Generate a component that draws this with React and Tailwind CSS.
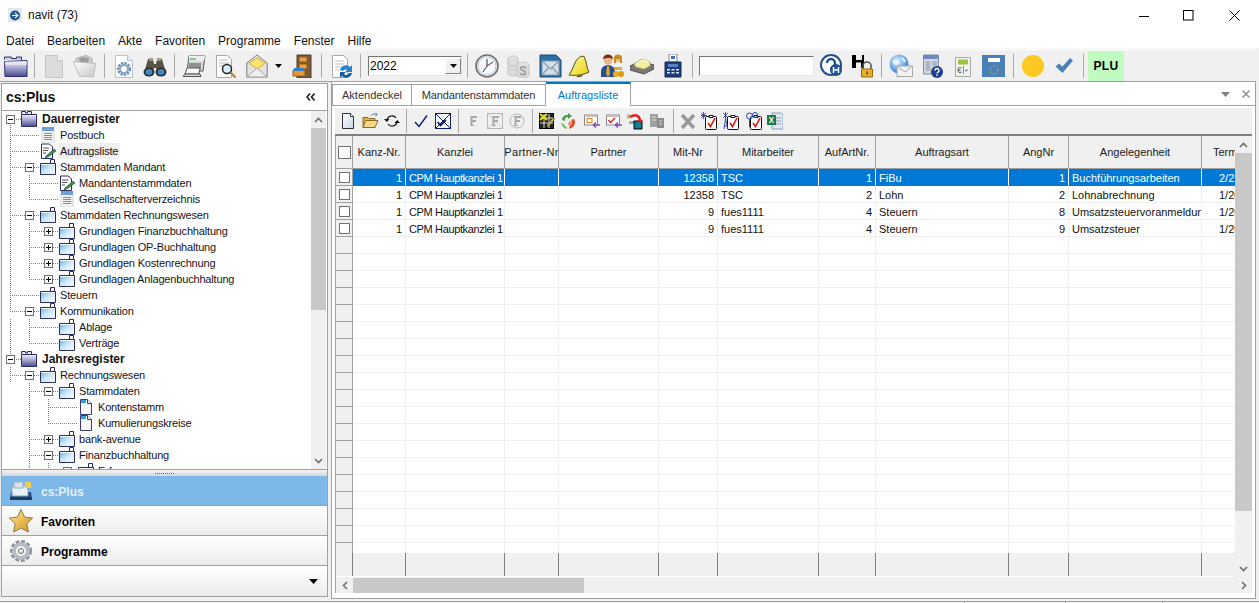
import React from "react";

const S = ({ w = 24, h = 24, vb, c = "", children }) => (
  <svg width={w} height={h} viewBox={vb || `0 0 ${w} ${h}`} className={`shrink-0 block ${c}`}>{children}</svg>
);

const Defs = () => (
  <svg width="0" height="0" className="absolute">
    <defs>
      <linearGradient id="fb" x1="0" y1="0" x2="1" y2="1"><stop offset="0" stopColor="#56b4ee" /><stop offset=".5" stopColor="#cfeafa" /><stop offset="1" stopColor="#ffffff" /></linearGradient>
      <linearGradient id="fr" x1="0" y1="0" x2="0" y2="1"><stop offset="0" stopColor="#f4f4fa" /><stop offset=".35" stopColor="#b9b9da" /><stop offset="1" stopColor="#4a4a92" /></linearGradient>
      <linearGradient id="gd" x1="0" y1="0" x2="1" y2="1"><stop offset="0" stopColor="#ffffff" /><stop offset="1" stopColor="#c9c9c9" /></linearGradient>
      <linearGradient id="bl" x1="0" y1="0" x2="1" y2="1"><stop offset="0" stopColor="#fff" /><stop offset="1" stopColor="#c7d6e6" /></linearGradient>
      <linearGradient id="ye" x1="0" y1="0" x2="1" y2="1"><stop offset="0" stopColor="#fffca0" /><stop offset="1" stopColor="#e8cf10" /></linearGradient>
      <linearGradient id="go" x1="0" y1="0" x2="1" y2="1"><stop offset="0" stopColor="#ffe9a0" /><stop offset="1" stopColor="#d68f10" /></linearGradient>
      <radialGradient id="gb" cx=".4" cy=".35" r=".7"><stop offset="0" stopColor="#e8f3ff" /><stop offset=".6" stopColor="#6aa8ec" /><stop offset="1" stopColor="#2a6cc8" /></radialGradient>
    </defs>
  </svg>
);

/* ---------- main toolbar icons ---------- */
const BigFolder = ({ c }) => (
  <S w={26} c={c}>
    <path d="M1.500 5.500V3h7v1.500h5V3h5v3" fill="#c9c9ea" stroke="#30306f" />
    <path d="M1.500 7.500L24 6.500v16H2z" fill="url(#fr)" stroke="#30306f" />
    <path d="M2 11h22V7.500H2z" fill="#e8e8f6" opacity=".8" />
  </S>
);
const GrayDoc = ({ c }) => (
  <S w={18} c={c}>
    <path d="M.5 1.500h12l5 5v17H.5z" fill="#dcdcdc" stroke="#c6c6c6" />
    <path d="M12.500 1.500v5h5" fill="#fafafa" stroke="#c6c6c6" />
  </S>
);
const GrayFolderOpen = ({ c }) => (
  <S c={c}>
    <path d="M3 4.500L13 1.500l6 3v5H3z" fill="#cfcfcf" stroke="#aaa" />
    <path d="M6 5a6 4 0 0 1 10 0l-1 4H7z" fill="#9b9b9b" />
    <path d="M.5 7.500l22 2-2 13.500-14-1z" fill="url(#gd)" stroke="#bdbdbd" />
  </S>
);
const GearDoc = ({ c }) => (
  <S w={18} c={c}>
    <path d="M.5 1.500h12l5 5v17H.5z" fill="#fff" stroke="#b9c3d0" />
    <path d="M12.500 1.500v5h5" fill="#e6ebf2" stroke="#b9c3d0" />
    <circle cx="9" cy="15" r="5.500" fill="none" stroke="#6d8fb4" strokeWidth="3" strokeDasharray="2.200 1" />
    <circle cx="9" cy="15" r="4" fill="none" stroke="#88a8cc" strokeWidth="2.200" />
  </S>
);
const Binoculars = ({ c }) => (
  <S c={c}>
    <path d="M5 5h5l1 5h2l1-5h5l4 14H15l-2-5h-2l-2 5H1z" fill="#5b5246" />
    <path d="M6 4h4v3H6zM14 4h4v3h-4z" fill="#a49a88" />
    <ellipse cx="6" cy="18" rx="5.500" ry="4.500" fill="#2b2b2b" />
    <ellipse cx="18" cy="18" rx="5.500" ry="4.500" fill="#2b2b2b" />
    <ellipse cx="6" cy="18" rx="3.500" ry="3" fill="#3f88c5" />
    <ellipse cx="18" cy="18" rx="3.500" ry="3" fill="#3f88c5" />
  </S>
);
const Printer = ({ c }) => (
  <S c={c}>
    <path d="M7 2h16l-2 15H5z" fill="#d4d6d8" stroke="#55595c" />
    <path d="M7 2h16l-1 5H7z" fill="#eceded" />
    <path d="M8 4h6v2H8z" fill="#7dc87d" />
    <path d="M7 9h12v6H7z" fill="#8d9092" />
    <path d="M5 14h13l-1 6H3z" fill="#fafafa" stroke="#55595c" />
    <path d="M3 20h15l1 2.500H1z" fill="#d8d8d8" stroke="#55595c" />
  </S>
);
const SearchDoc = ({ c }) => (
  <S w={22} c={c}>
    <path d="M.5 1.500h11l4 4v18H.5z" fill="#fff" stroke="#a9a9a9" />
    <path d="M3 6h8M3 9h10M3 12h5" stroke="#b5b5b5" />
    <circle cx="11" cy="15" r="4.500" fill="#dbeeff" stroke="#222" strokeWidth="1.500" />
    <path d="M14.500 18.500l5 5" stroke="#b58a2c" strokeWidth="2.400" />
  </S>
);
const Envelope = ({ c }) => (
  <S w={22} c={c}>
    <path d="M.8 9L11 1l10.200 8v14H.8z" fill="#e3e3e3" stroke="#7c7c7c" />
    <path d="M3 9l8-5 8 5-8 6z" fill="#ffe36a" stroke="#cfae2a" />
    <path d="M1 23l10-9 10 9z" fill="#f0f0f0" stroke="#a5a5a5" />
  </S>
);
const Cabinet = ({ c }) => (
  <S w={20} c={c}>
    <path d="M5 1h14v23H5z" fill="#7a5a38" stroke="#4f3a22" />
    <path d="M7 3h8v5H7zM7 10h8v5H7z" fill="#e9a23d" stroke="#8a5a20" />
    <path d="M1 16h12v6H1z" fill="#e89b30" stroke="#8a5a20" />
    <path d="M2 14h10v3H2z" fill="#2f7fd0" />
  </S>
);
const DocRefresh = ({ c }) => (
  <S w={22} c={c}>
    <path d="M.5 1.500h11l4 4v18H.5z" fill="#fff" stroke="#a9a9a9" />
    <path d="M3 7h9M3 10h9M3 13h5M3 16h4" stroke="#bdbdbd" />
    <path d="M8 16a6 6 0 0 1 10-3l2-2v7h-7l2-2a3 3 0 0 0-4 1z" fill="#2a82c9" />
    <path d="M20 19a6 6 0 0 1-10 3l-2 2v-6h6l-2 2a3 3 0 0 0 5-1z" fill="#155da3" />
  </S>
);
const Clock = ({ c }) => (
  <S c={c}>
    <circle cx="12" cy="12" r="11" fill="#e9eef4" stroke="#6f6f6f" strokeWidth="1.600" />
    <circle cx="12" cy="12" r="9" fill="#f6f8fb" stroke="#b8c4d2" />
    <path d="M12 12l6-4M12 12l-4 6M12 12V5" stroke="#333" strokeWidth="1" fill="none" />
  </S>
);
const Coins = ({ c }) => (
  <S c={c}>
    <ellipse cx="7" cy="5" rx="5" ry="3" fill="#e4e4e4" stroke="#c6c6c6" />
    <path d="M2 5v14a5 3 0 0 0 10 0V5" fill="#dcdcdc" stroke="#c6c6c6" />
    <path d="M2 9a5 3 0 0 0 10 0M2 13a5 3 0 0 0 10 0" fill="none" stroke="#c6c6c6" />
    <ellipse cx="17" cy="11" rx="6" ry="3" fill="#e6e6e6" stroke="#c6c6c6" />
    <path d="M11 11v10a6 3 0 0 0 12 0V11" fill="#dadada" stroke="#c6c6c6" />
    <path d="M19.500 14.500a2.500 1.800 0 0 0-5 0c0 2.500 5 1.500 5 4.500a2.500 1.800 0 0 1-5 0" fill="none" stroke="#9a9a9a" strokeWidth="1.500" />
  </S>
);
const BlueEnvelope = ({ c }) => (
  <S w={23} c={c}>
    <path d="M1 1h16l5 5v17H1z" fill="#2a6fa8" stroke="#1d4c78" />
    <path d="M3 7h17v14H3z" fill="#d5dfe8" stroke="#7d97ad" />
    <path d="M3 7l8.500 8L20 7M3 21l7-8M20 21l-7-8" fill="none" stroke="#8a9aaa" strokeWidth="1.200" />
  </S>
);
const Bell = ({ c }) => (
  <S c={c}>
    <path d="M15 2a3 3 0 0 1 3 3c2 3 1 8 4 13-6 3-14 4-20 3 3-4 4-8 6-12 1-3 4-6 7-7z" fill="url(#ye)" stroke="#55501c" strokeWidth="1" />
    <path d="M9 22a4 3 0 0 0 7-1z" fill="#55501c" />
  </S>
);
const People = ({ c }) => (
  <S c={c}>
    <circle cx="8" cy="6" r="4.500" fill="#e8b58c" />
    <path d="M3 5a5 4.500 0 0 1 10 0c-2-1.500-7-1.500-10 0z" fill="#7a2f14" />
    <path d="M1 23v-6a7 6 0 0 1 14 0v6z" fill="#254f8f" />
    <path d="M7 12h2l1 8-2 3-2-3z" fill="#d8a52a" />
    <circle cx="18" cy="5" r="3" fill="#e8b58c" />
    <path d="M14 4a4 3.500 0 0 1 8 0v5h-2V5h-4v4h-2z" fill="#c58a20" />
    <path d="M14 13h8v3h-8z" fill="#e1a92f" />
    <circle cx="16" cy="20" r="3" fill="#eab020" />
    <circle cx="21" cy="20" r="3" fill="#d99c15" />
  </S>
);
const Tray = ({ c }) => (
  <S c={c}>
    <path d="M0 12l10-5 14 4v4l-10 5-14-4z" fill="#787878" stroke="#555" />
    <path d="M4 10l8-5 8 3v4l-6 3-8-2z" fill="#f2ef9e" stroke="#b9b25a" />
    <path d="M6 10l7-4 6 2.500" fill="none" stroke="#fbf9d2" strokeWidth="1.500" />
  </S>
);
const Calc = ({ c }) => (
  <S w={18} c={c}>
    <path d="M5 0h8v8H5z" fill="#fff" stroke="#7a8aa0" />
    <path d="M7 2h4v3H7z" fill="#4a6fa8" />
    <path d="M1 8h16v15H1z" fill="#1d3d7c" stroke="#122a58" />
    <path d="M4 10h10v3H4z" fill="#5b7fc0" />
    <path d="M3 15h3v1.600H3zM7.500 15h3v1.600h-3zM12 15h3v1.600h-3zM3 18h3v1.600H3zM7.500 18h3v1.600h-3zM12 18h3v1.600h-3z" fill="#dde6f4" />
  </S>
);
const HelpCircle = ({ c }) => (
  <S w={22} c={c}>
    <circle cx="11" cy="11" r="10" fill="#fff" stroke="#20508f" strokeWidth="2" />
    <path d="M7 9a4 4 0 1 1 6 3.500c-1.500 1-2 1.500-2 3" fill="none" stroke="#20508f" strokeWidth="2.400" />
    <circle cx="16" cy="16" r="6" fill="#20508f" />
    <path d="M13.500 13v6M18.500 13v6M13.500 16h5" stroke="#fff" strokeWidth="1.500" />
  </S>
);
const HLock = ({ c }) => (
  <S w={22} c={c}>
    <path d="M1 1h4v5h6V1h2v13h-3V8.500H5V14H1z" fill="#000" />
    <path d="M12 15v-3a4 4 0 0 1 8 0v3" fill="none" stroke="#555" strokeWidth="1.600" />
    <path d="M10.500 15h11v8h-11z" fill="#e8b030" stroke="#9a6a12" />
    <path d="M16 17.500v3" stroke="#6a4a10" strokeWidth="1.600" />
  </S>
);
const GlobeMail = ({ c }) => (
  <S c={c}>
    <circle cx="10" cy="10" r="9.500" fill="url(#gb)" />
    <path d="M4 6c3-2 5 0 6 2s-2 4-4 3-3-3-2-5zM12 3c2 0 5 2 5 5-2 1-4-1-5-5z" fill="#f0f6ff" opacity=".8" />
    <path d="M8 12h15.500v10.500H8z" fill="#f2f2f2" stroke="#a7a7a7" />
    <path d="M8 12l8 6 7.500-6" fill="none" stroke="#a7a7a7" />
  </S>
);
const WinHelp = ({ c }) => (
  <S w={20} c={c}>
    <path d="M.5 1h15v19H.5z" fill="#d4d9e4" stroke="#7f8dab" />
    <path d="M1 1h14v4H1z" fill="#6a8ac0" />
    <path d="M2.500 7h5v10h-5zM9 7h5v5H9z" fill="#aeb6c6" />
    <circle cx="14" cy="18" r="6" fill="#1d3f8c" />
    <path d="M12 16.500a2 2 0 1 1 2.800 1.800c-.6.3-.8.6-.8 1.200" fill="none" stroke="#fff" strokeWidth="1.400" />
    <path d="M13.300 20.500h1.400v1.400h-1.400z" fill="#fff" />
  </S>
);
const EuroBox = ({ c }) => (
  <S w={16} c={c}>
    <path d="M.5 3.500h15v19H.5z" fill="#f4f4f4" stroke="#a8a8a8" />
    <path d="M3 5.500h10v5H3z" fill="#9ac63e" />
    <text x="2" y="18.500" fontSize="9" fill="#555" fontFamily="Liberation Sans">€</text>
    <path d="M8.500 12v8M10 16l1 1.500 1-2 1 1.500" fill="none" stroke="#888" />
  </S>
);
const BlueCalc = ({ c }) => (
  <S w={23} c={c}>
    <path d="M0 1h23v22H0z" fill="#4a7fb8" />
    <path d="M6 4h12v4H6z" fill="#fff" />
    <circle cx="12" cy="16" r="4" fill="none" stroke="#e8e040" strokeWidth="1" strokeDasharray="1 2" />
  </S>
);
const BlueCheck = ({ c }) => (
  <S w={18} c={c}>
    <path d="M.5 12.500l3.500-3 3.500 3L15 4l3 2.500L7.500 19z" fill="#4a7fb8" />
  </S>
);

/* ---------- tree icons ---------- */
const FolderIcon = () => (
  <S w={16} h={16}>
    <path d="M10.500 4V.5h4V4" fill="#fff" stroke="#2c2c66" />
    <path d="M.5 4.500h15v11H.5z" fill="url(#fb)" stroke="#2c2c66" />
    <path d="M1 5h14v1H1z" fill="#fff" />
  </S>
);
const RootFolder = () => (
  <S w={16} h={16}>
    <path d="M.5 3V.5h4V2h2V.5h4V3" fill="#e8e8f4" stroke="#2c2c66" />
    <path d="M.5 3.500h15v12H.5z" fill="url(#fr)" stroke="#2c2c66" />
  </S>
);
const ListIcon = () => (
  <S w={16} h={16}>
    <path d="M2 0h12v16H2z" fill="#f4f4f4" stroke="#d4d4d4" />
    <path d="M2 0h12v4H2z" fill="#6ea0d8" />
    <path d="M4 6.500h8M4 8.500h8M4 10.500h8M4 12.500h8" stroke="#8a8a8a" />
  </S>
);
const EditIcon = () => (
  <S w={16} h={16}>
    <path d="M1.500 1h8l3 3v11.500h-11z" fill="#fff" stroke="#2c2c66" />
    <path d="M3 5h6M3 7.500h5M3 10h3" stroke="#555" />
    <path d="M6 13l8-7 2 2-8 6-3 1z" fill="#3f8f4f" stroke="#1f4f2a" strokeWidth=".6" />
  </S>
);
const DocIcon = () => (
  <S w={16} h={16}>
    <path d="M2.500.5h7l4 4v11h-11z" fill="#f8f8ff" stroke="#3a3a78" />
    <path d="M3 1h5v3H3z" fill="#3a9ee0" />
    <path d="M9.500.5v4h4" fill="#fff" stroke="#3a3a78" />
  </S>
);
const treeIcons = { f: FolderIcon, r: RootFolder, l: ListIcon, e: EditIcon, d: DocIcon };

const tree = [
  { t: "Dauerregister", i: "r", x: "-", b: 1, k: [
    { t: "Postbuch", i: "l" },
    { t: "Auftragsliste", i: "e", h: 1 },
    { t: "Stammdaten Mandant", i: "f", x: "-", k: [
      { t: "Mandantenstammdaten", i: "e" },
      { t: "Gesellschafterverzeichnis", i: "l" },
    ] },
    { t: "Stammdaten Rechnungswesen", i: "f", x: "-", k: [
      { t: "Grundlagen Finanzbuchhaltung", i: "f", x: "+" },
      { t: "Grundlagen OP-Buchhaltung", i: "f", x: "+" },
      { t: "Grundlagen Kostenrechnung", i: "f", x: "+" },
      { t: "Grundlagen Anlagenbuchhaltung", i: "f", x: "+" },
    ] },
    { t: "Steuern", i: "f" },
    { t: "Kommunikation", i: "f", x: "-", k: [
      { t: "Ablage", i: "f" },
      { t: "Verträge", i: "f" },
    ] },
  ] },
  { t: "Jahresregister", i: "r", x: "-", b: 1, k: [
    { t: "Rechnungswesen", i: "f", x: "-", k: [
      { t: "Stammdaten", i: "f", x: "-", k: [
        { t: "Kontenstamm", i: "d" },
        { t: "Kumulierungskreise", i: "d" },
      ] },
      { t: "bank-avenue", i: "f", x: "+" },
      { t: "Finanzbuchhaltung", i: "f", x: "-", k: [
        { t: "Erfassung", i: "f", x: "+" },
        { t: "Auswertungen", i: "f", x: "+" },
      ] },
      { t: "Lohn", i: "f", x: "+" },
    ] },
    { t: "Steuern", i: "f", x: "+" },
  ] },
];

const flatten = (nodes, level = 0, cont = [], out = []) => {
  nodes.forEach((n, idx) => {
    const last = idx === nodes.length - 1;
    out.push({ ...n, level, cont, last, first: level === 0 && idx === 0 });
    if (n.k) flatten(n.k, level + 1, [...cont, !last], out);
  });
  return out;
};
const rows = flatten(tree).slice(0, 23);

const Guides = ({ r }) => {
  const w = 19 + 19 * r.level;
  const bx = 8 + 19 * r.level;
  const dash = { stroke: "#7a7a7a", strokeDasharray: "1 1", shapeRendering: "crispEdges", fill: "none" };
  const lx = r.level === 0 ? 8 : 8 + 19 * (r.level - 1);
  return (
    <svg width={w} height={16} className="shrink-0 block">
      {r.cont.slice(0, -1).map((c, i) => (c ? <path key={i} d={`M${8 + 19 * i + 0.5} 0V16`} {...dash} /> : null))}
      {r.level > 0 && <path d={`M${lx + 0.5} 0V${r.last ? 8 : 16}M${lx} 8.5H${w}`} {...dash} />}
      {r.level === 0 && <path d={`M8.5 ${r.first ? 8 : 0}V${r.last ? 8 : 16}M8 8.5H${w}`} {...dash} />}
      {r.x && (
        <g shapeRendering="crispEdges">
          <rect x={bx - 4 + 0.5} y={4.5} width={8} height={8} fill="#fff" stroke="#6f6f6f" />
          <path d={`M${bx - 2} 8.5H${bx + 3}`} stroke="#000" />
          {r.x === "+" && <path d={`M${bx + 0.5} 6V11`} stroke="#000" />}
        </g>
      )}
    </svg>
  );
};

const Tree = () => (
  <div className="flex-1 min-w-0 overflow-hidden">
    {rows.map((r, i) => {
      const Ic = treeIcons[r.i];
      return (
        <div key={i} className="flex items-center h-4 whitespace-nowrap">
          <Guides r={r} />
          <Ic />
          <span
            className={`leading-4 text-[#141414] ${r.b ? "ml-[5px] font-bold text-xs" : "ml-0.5 px-0.5 text-[11px] tracking-[-0.17px]"} ${r.h ? "bg-[#f0f0f0]" : ""}`}
          >
            {r.t}
          </span>
        </div>
      );
    })}
  </div>
);

const Chev = ({ d }) => (
  <svg width="9" height="6" viewBox="0 0 9 6" className="block">
    <path d={d === "u" ? "M1 5l3.500-3.500L8 5" : "M1 1l3.500 3.500L8 1"} fill="none" stroke="#6e6e6e" strokeWidth="1.600" />
  </svg>
);
const ChevH = ({ d }) => (
  <svg width="6" height="9" viewBox="0 0 6 9" className="block">
    <path d={d === "l" ? "M5 1L1.500 4.500 5 8" : "M1 1l3.500 3.500L1 8"} fill="none" stroke="#6e6e6e" strokeWidth="1.600" />
  </svg>
);

/* ---------- outlook bar icons ---------- */
const OutTray = () => (
  <S w={24}>
    <path d="M2 13h20l1 8H1z" fill="#234a7e" />
    <path d="M3 7h13l3 3v7H3z" fill="#e8f0f8" stroke="#8aa0b8" />
    <path d="M5 3h9v6H5z" fill="#d8e4f0" stroke="#9ab0c6" />
    <path d="M16 3h6v6h-6z" fill="#f0d050" />
    <path d="M1 18h22v3H1z" fill="#1d3a66" />
  </S>
);
const Star = () => (
  <S w={24}>
    <path d="M12 .5l3.600 7.600 8 1-5.800 5.600 1.600 8.300L12 19l-7.400 4 1.600-8.300L.4 9.100l8-1z" fill="url(#go)" stroke="#8a7a4a" />
  </S>
);
const Gear = () => (
  <S w={24}>
    <circle cx="12" cy="12" r="8.500" fill="none" stroke="#8a9098" strokeWidth="5" strokeDasharray="3.400 1.600" />
    <circle cx="12" cy="12" r="7" fill="none" stroke="#b8bcc2" strokeWidth="4" />
    <circle cx="12" cy="12" r="2.500" fill="#eee" stroke="#666" />
  </S>
);

/* ---------- list toolbar icons ---------- */
const TNew = ({ c }) => (
  <S w={16} h={18} c={c}>
    <path d="M2.500 1.500h8l3 3v12h-11z" fill="url(#bl)" stroke="#333" />
    <path d="M10.500 1.500v3h3" fill="#fff" stroke="#333" />
  </S>
);
const TOpen = ({ c }) => (
  <S w={16} h={18} c={c}>
    <path d="M1 5.500h5l1 1h6v9H1z" fill="#e3b04b" stroke="#8a6a20" />
    <path d="M1 15.500l2.500-7H16l-3 7z" fill="#f7d984" stroke="#8a6a20" />
    <path d="M9 4c1-2 3-2.500 5-2M14 1l1 2-2 1" fill="none" stroke="#5a7fa8" />
  </S>
);
const TRefresh = ({ c }) => (
  <S w={16} h={18} c={c}>
    <path d="M3 8a5 5 0 0 1 9-2M13 10a5 5 0 0 1-9 2" fill="none" stroke="#111" strokeWidth="1.200" />
    <path d="M0 7h5.500l-2.700 3zM10.500 11H16l-2.700-3z" fill="#111" />
  </S>
);
const TCheck = ({ c }) => (
  <S w={16} h={18} c={c}>
    <path d="M2 10l4 4.500L14 3.500" fill="none" stroke="#0a1a6e" strokeWidth="1.400" />
  </S>
);
const TCheckBox = ({ c }) => (
  <S w={16} h={18} c={c}>
    <rect x=".5" y="1.500" width="15" height="15" fill="#fff" stroke="#0a1a6e" />
    <path d="M1 2l14 14M15 2L1 16" stroke="#0a1a6e" />
    <path d="M2.500 10l3 3.500L11 8" fill="none" stroke="#0a1a6e" strokeWidth="1.800" />
  </S>
);
const TF = ({ c, k, o }) => (
  <S w={16} h={18} c={c}>
    {k && <rect x=".5" y="1.500" width="15" height="15" fill="none" stroke="#b5b5b5" />}
    {k && <path d="M1 2l14 14M15 2L1 16" stroke="#cfcfcf" />}
    {o && <circle cx="8" cy="9" r="7" fill="none" stroke="#b5b5b5" />}
    <path d="M5 4h7v2H7.500v2H11v2H7.500v3h1.500v1H5v-1h.5V5H5z" fill="#a8a8a8" />
  </S>
);
const TGrid = ({ c }) => (
  <S w={16} h={18} c={c}>
    <rect x=".5" y="1.500" width="14" height="15" fill="#222" stroke="#000" />
    <path d="M1 6h13M1 11h13M5 2v14M10 2v14" stroke="#ddd" />
    <path d="M1 2l7 6M8 2L1 8" stroke="#e0e020" strokeWidth="2" />
    <path d="M8 13l6-7 2 1-6 7-2 1z" fill="#d8c040" stroke="#444" strokeWidth=".5" />
  </S>
);
const TRecycle = ({ c }) => (
  <S w={16} h={18} c={c}>
    <path d="M2 8a5 5 0 0 1 6-5V1l4 3-4 3V5a3 3 0 0 0-3 4z" fill="#4f9c4a" />
    <path d="M1 11l3 1a4 4 0 0 0 3 3v2c-3 0-5-3-6-6z" fill="#7ac070" />
    <path d="M14 7a6 6 0 0 1-3 9l-2 1 1-4a3 3 0 0 0 1-5z" fill="#d8502a" />
    <path d="M9 9l3 1-1 4-3-1z" fill="#e89070" />
  </S>
);
const TBoxArrow = ({ c, check }) => (
  <S w={16} h={18} c={c}>
    <rect x=".5" y="3" width="13" height="10" fill="#fff" stroke="#888" />
    <path d="M.5 3h13v2H.5z" fill="#c0c0c0" />
    {check ? <path d="M2.500 8l2 2.500L9 6" fill="none" stroke="#e02020" strokeWidth="1.400" /> : <rect x="3" y="6.500" width="5" height="4" fill="#fff" stroke="#e08020" />}
    <path d="M16 13H9M9 13l3-2.500M9 13l3 2.500" stroke="#7a50b8" strokeWidth="1.500" fill="none" />
  </S>
);
const TArrowBox = ({ c }) => (
  <S w={16} h={18} c={c}>
    <path d="M0 3h3v3H0z" fill="#e0e040" stroke="#666" strokeWidth=".5" />
    <path d="M3 5c5-3 9-2 10 3" fill="none" stroke="#e02020" strokeWidth="2.500" />
    <path d="M2 9h6v3H2z" fill="#9ab" />
    <path d="M7 9h8v8H7z" fill="#0f7f96" stroke="#000" />
    <path d="M10 8h6l-3 3z" fill="#e02020" />
  </S>
);
const TGrayBoxes = ({ c }) => (
  <S w={16} h={18} c={c}>
    <path d="M1 2h8v13H1z" fill="#a0a0a0" />
    <path d="M8 6h7v10H8z" fill="#8c8c8c" />
    <path d="M3 5h4M3 8h4M10 9h3M10 12h3" stroke="#d8d8d8" />
  </S>
);
const TX = ({ c }) => (
  <S w={16} h={18} c={c}>
    <path d="M2 3l12 13M14 3L2 16" stroke="#9a9a9a" strokeWidth="3.500" />
  </S>
);
const TSpark = ({ c, v }) => (
  <S w={16} h={18} c={c}>
    <rect x="4.500" y="4.500" width="11" height="13" fill="#fff" stroke="#111" rx="1" />
    <path d="M8 3.500h4v2H8z" fill="#fff" stroke="#111" />
    <path d="M7 11l2.500 3.500L14 6" fill="none" stroke="#e01010" strokeWidth="1.600" />
    {v === 0 && <path d="M0 1l5 5M5 1L0 6M2.500 0v7M0 3.500h6" stroke="#1a2a9a" strokeWidth=".8" />}
    {v === 1 && <path d="M0 1l5 5M5 1L0 6M2.500 0v7M2.500 7L1 17M2.500 7L5 17M1 14h4" stroke="#1a2a9a" strokeWidth=".8" fill="none" />}
    {v === 2 && <g fill="none" stroke="#1a4ac8"><circle cx="3.500" cy="4" r="3" /><circle cx="9" cy="3" r="2.500" /><path d="M3.500 7v8" /></g>}
  </S>
);
const TExcel = ({ c }) => (
  <S w={16} h={18} c={c}>
    <path d="M5 1h9l2 2v14H5z" fill="#dfe7f2" stroke="#8aa0bc" />
    <path d="M8 6h6M8 9h6M8 12h6" stroke="#8aa0bc" />
    <path d="M0 3h9v10H0z" fill="#1d7a3c" />
    <path d="M2.500 5l4 6M6.500 5l-4 6" stroke="#fff" strokeWidth="1.300" />
  </S>
);

const Sep = ({ c }) => <div className={`w-px h-6 bg-[#a8a8a8] shrink-0 ${c}`} />;

const cols = "grid grid-cols-[17px_53px_99px_54px_100px_59px_101px_57px_133px_60px_133px_33px]";
const heads = [
  ["Kanz-Nr.", ""], ["Kanzlei", ""], ["Partner-Nr", "tracking-[0.3px]"], ["Partner", ""], ["Mit-Nr", ""], ["Mitarbeiter", ""],
  ["AufArtNr.", ""], ["Auftragsart", ""], ["AngNr", ""], ["Angelegenheit", ""],
];
const data = [
  ["1", "CPM Hauptkanzlei 1", "", "", "12358", "TSC", "1", "FiBu", "1", "Buchführungsarbeiten", "2/2"],
  ["1", "CPM Hauptkanzlei 1", "", "", "12358", "TSC", "2", "Lohn", "2", "Lohnabrechnung", "1/20"],
  ["1", "CPM Hauptkanzlei 1", "", "", "9", "fues1111", "4", "Steuern", "8", "Umsatzsteuervoranmeldung", "1/20"],
  ["1", "CPM Hauptkanzlei 1", "", "", "9", "fues1111", "4", "Steuern", "9", "Umsatzsteuer", "1/20"],
];
const rightAligned = [0, 4, 6, 8];
const blank = Array(11).fill("");
const allRows = [...data, ...Array(19).fill(blank)];

const Grid = () => (
  <div className="flex-1 min-h-0 flex border-l border-[#a0a0a0]">
    <div className="w-[899px] flex flex-col min-h-0">
      <div className={`${cols} h-[33px] bg-[#f0f0f0] border-b border-[#a0a0a0] shrink-0 text-[#1a1a1a]`}>
        <div className="border-r border-[#a0a0a0] flex items-center justify-center">
          <div className="w-[13px] h-[13px] bg-white border border-[#707070]" />
        </div>
        {heads.map(([h, x], i) => (
          <div key={i} className={`border-r border-[#a0a0a0] flex items-center justify-center overflow-hidden whitespace-nowrap ${x}`}>{h}</div>
        ))}
        <div className="flex items-center pl-[11px] overflow-hidden whitespace-nowrap">Termin</div>
      </div>
      <div className="flex-1 min-h-0 overflow-hidden">
        {allRows.map((r, i) => (
          <div key={i} className={`${cols} h-[17px] ${i === 0 ? "bg-[#0078d7] text-white" : "text-[#111]"}`}>
            <div className="bg-[#f0f0f0] border-r border-b border-[#a0a0a0] flex items-center justify-center">
              {i < 4 && <div className="w-[11px] h-[11px] bg-white border border-[#707070]" />}
            </div>
            {r.map((v, j) => (
              <div
                key={j}
                className={`overflow-hidden whitespace-nowrap leading-[18px] border-b ${i === 0 ? "border-[#0078d7]" : "border-[#f0f0f0]"} ${j < 10 ? (i === 0 ? "border-r border-r-white" : "border-r border-r-[#f0f0f0]") : ""} ${
                  j === 10 ? "pl-[17px]" : rightAligned.includes(j) ? "text-right pr-[3px]" : "pl-[3px]"
                } ${j === 1 ? "tracking-[-0.36px]" : ""}`}
              >
                {v}
              </div>
            ))}
          </div>
        ))}
      </div>
      <div className={`${cols} h-[24px] bg-[#f0f0f0] shrink-0 border-b border-white`}>
        {Array(12).fill(0).map((_, i) => (
          <div key={i} className={i < 11 ? "border-r border-[#808080]" : ""} />
        ))}
      </div>
    </div>
    <div className="w-[17px] bg-[#f0f0f0] flex flex-col shrink-0">
      <div className="h-[17px] flex items-center justify-center shrink-0"><Chev d="u" /></div>
      <div className="h-[358px] bg-[#c8c8c8] shrink-0" />
      <div className="flex-1" />
      <div className="h-[17px] flex items-center justify-center shrink-0"><Chev d="d" /></div>
    </div>
  </div>
);

const Item = ({ children, label, active }) => (
  <div
    className={`h-[30px] flex items-center border-b border-[#a0a0a0] font-bold text-xs ${
      active ? "bg-[#7db8e8] text-[#e4f1fb]" : "bg-linear-to-b from-white to-[#ececec] text-black"
    }`}
  >
    <div className="ml-[7px] w-[32px]">{children}</div>
    <span className="mt-0.5">{label}</span>
  </div>
);

export default function App() {
  return (
    <div className="relative w-[1259px] h-[603px] overflow-hidden flex flex-col bg-[#f0f0f0] font-['Liberation_Sans',Arial,sans-serif] text-[11px] text-black">
      <Defs />
      {/* Title bar */}
      <div className="h-[30px] bg-white flex items-center shrink-0">
        <svg width="14" height="14" viewBox="0 0 14 14" className="ml-2 block">
          <rect x="0" y="0" width="14" height="14" fill="#e4e8ee" />
          <circle cx="7" cy="7.500" r="5" fill="#22598f" />
          <path d="M4 7.500h6M7 5l3 2.500-3 2.500" fill="none" stroke="#dfeaf5" strokeWidth="1.200" />
        </svg>
        <span className="ml-[6px] text-xs text-[#111]">navit (73)</span>
        <div className="ml-auto flex items-center">
          <svg width="11" height="11" className="block mr-[34px]"><path d="M1 6.500h10" stroke="#000" /></svg>
          <svg width="11" height="11" className="block mr-[35px]"><rect x=".5" y=".5" width="9.500" height="9.500" fill="none" stroke="#000" /></svg>
          <svg width="11" height="11" className="block mr-[19px]"><path d="M.5.5l10 10M10.500.5l-10 10" stroke="#000" /></svg>
        </div>
      </div>
      {/* Menu */}
      <div className="h-[18px] bg-white flex items-center text-xs text-[#111] shrink-0 pl-1.5 pt-[3px] gap-[13px]">
        {["Datei", "Bearbeiten", "Akte", "Favoriten", "Programme", "Fenster", "Hilfe"].map((m) => (
          <span key={m}>{m}</span>
        ))}
      </div>
      {/* Main toolbar */}
      <div className="h-[34px] shrink-0 pt-[3px] bg-[#f8f8f8] w-[1256px]">
        <div className="h-[31px] bg-[#f0f0f0] border-b border-[#a0a0a0] flex items-center">
          <BigFolder c="ml-[3px]" />
          <Sep c="ml-[5px]" />
          <GrayDoc c="ml-[10px]" />
          <GrayFolderOpen c="ml-[10px]" />
          <Sep c="ml-[7px]" />
          <GearDoc c="ml-[10px]" />
          <Binoculars c="ml-[10px]" />
          <Sep c="ml-[7px]" />
          <Printer c="ml-[7px]" />
          <SearchDoc c="ml-[10px]" />
          <Envelope c="ml-[8px]" />
          <svg width="7" height="4" className="ml-[7px] block shrink-0"><path d="M0 0h7L3.500 4z" fill="#000" /></svg>
          <Cabinet c="ml-[10px]" />
          <Sep c="ml-[9px]" />
          <DocRefresh c="ml-[10px]" />
          <Sep c="ml-[6px]" />
          <div className="ml-[7px] w-[94px] h-5 bg-white border border-[#767676] border-r-[#e8e8e8] border-b-[#e8e8e8] flex items-center justify-between shrink-0">
            <span className="pl-px text-xs">2022</span>
            <div className="w-[16px] h-[16px] bg-[#f0f0f0] border border-[#808080] border-l-white border-t-white flex items-center justify-center">
              <svg width="7" height="4"><path d="M0 0h7L3.500 4z" fill="#000" /></svg>
            </div>
          </div>
          <Sep c="ml-[5px]" />
          <Clock c="ml-[7px]" />
          <Coins c="ml-[7px]" />
          <BlueEnvelope c="ml-[9px]" />
          <Bell c="ml-[5px]" />
          <People c="ml-[9px]" />
          <Tray c="ml-[6px]" />
          <Calc c="ml-[10px]" />
          <Sep c="ml-[10px]" />
          <div className="ml-[6px] w-[115px] h-5 bg-white border border-[#767676] border-r-[#e8e8e8] border-b-[#e8e8e8] shrink-0" />
          <HelpCircle c="ml-[6px]" />
          <HLock c="ml-[9px]" />
          <Sep c="ml-[8px]" />
          <GlobeMail c="ml-[7px]" />
          <WinHelp c="ml-[10px]" />
          <EuroBox c="ml-[12px]" />
          <BlueCalc c="ml-[11px]" />
          <Sep c="ml-[8px]" />
          <div className="ml-[8px] w-[22px] h-[22px] rounded-full bg-[#fcc824] shrink-0" />
          <BlueCheck c="ml-[11px]" />
          <Sep c="ml-[10px]" />
          <div className="ml-1 w-9 h-[30px] bg-[#c0fcc0] flex items-center justify-center font-bold text-xs text-black tracking-[0.3px] shrink-0">PLU</div>
        </div>
      </div>
      {/* Main */}
      <div className="flex-1 min-h-0 flex">
        {/* Left */}
        <div className="w-[327px] ml-px mt-px h-[514px] border border-[#a0a0a0] bg-white flex flex-col shrink-0">
          <div className="h-[27px] shrink-0 flex items-center justify-between border-b border-[#a0a0a0] pl-1 pr-3">
            <span className="font-bold text-[14px] tracking-[-0.1px] text-[#111]">cs:Plus</span>
            <svg width="9" height="8" className="block"><path d="M4 .5L1 4l3 3.500M8.500.5L5.500 4l3 3.500" fill="none" stroke="#222" strokeWidth="1.600" /></svg>
          </div>
          <div className="h-[358px] shrink-0 flex">
            <Tree />
            <div className="w-[15px] mr-px bg-[#f0f0f0] flex flex-col shrink-0">
              <div className="h-[17px] flex items-center justify-center shrink-0"><Chev d="u" /></div>
              <div className="h-[182px] bg-[#c8c8c8] shrink-0" />
              <div className="flex-1" />
              <div className="h-[17px] flex items-center justify-center shrink-0"><Chev d="d" /></div>
            </div>
          </div>
          <div className="h-[7px] shrink-0 border-t border-[#a0a0a0] bg-linear-to-b from-[#f4f4f4] to-[#d8d8d8] flex items-center justify-center">
            <div className="w-[19px] h-px border-t border-dotted border-[#666]" />
          </div>
          <Item label="cs:Plus" active><OutTray /></Item>
          <Item label="Favoriten"><Star /></Item>
          <Item label="Programme"><Gear /></Item>
          <div className="flex-1 bg-linear-to-b from-white to-[#ececec] flex items-center justify-end pr-[9px]">
            <svg width="9" height="5"><path d="M0 0h9L4.500 5z" fill="#000" /></svg>
          </div>
        </div>
        {/* Right */}
        <div className="w-[925px] ml-[3px] h-[517px] bg-white border-l border-r border-b border-[#a0a0a0] flex flex-col shrink-0">
          <div className="h-[24px] shrink-0 flex items-end border-b border-[#a0a0a0]">
            <div className="h-[22px] w-20 -mb-px bg-white border border-[#a0a0a0] flex items-center justify-center text-[#333]">Aktendeckel</div>
            <div className="h-[22px] w-[134px] -mb-px bg-white border border-l-0 border-[#a0a0a0] flex items-center justify-center text-[#333] tracking-[-0.1px]">Mandantenstammdaten</div>
            <div className="h-[24px] w-[85px] -mb-px bg-white border-t-2 border-t-[#0078c8] border-r border-r-[#a0a0a0] flex items-center justify-center text-[#0078c8]">Auftragsliste</div>
            <div className="ml-auto flex items-center h-[22px] pr-[5px]">
              <svg width="9" height="5"><path d="M0 0h9L4.500 5z" fill="#808080" /></svg>
              <svg width="8" height="8" className="ml-3"><path d="M.5.5l7 7M7.500.5l-7 7" stroke="#909090" strokeWidth="1.500" /></svg>
            </div>
          </div>
          <div className="flex-1 min-h-0 pt-0.5 pl-[3px] pr-[3px] flex flex-col">
            <div className="h-[28px] shrink-0 bg-[#f0f0f0] flex items-center border-b-2 border-[#808080]">
              <TNew c="ml-[5px]" />
              <TOpen c="ml-[6px]" />
              <TRefresh c="ml-[6px]" />
              <Sep c="ml-[6px]" />
              <TCheck c="ml-[6px]" />
              <TCheckBox c="ml-[6px]" />
              <Sep c="ml-[7px]" />
              <TF c="ml-[6px]" />
              <TF c="ml-[6px]" k />
              <TF c="ml-[6px]" o />
              <Sep c="ml-[7px]" />
              <TGrid c="ml-[6px]" />
              <TRecycle c="ml-[5px]" />
              <TBoxArrow c="ml-[8px]" />
              <TBoxArrow c="ml-[6px]" check />
              <TArrowBox c="ml-[5px]" />
              <TGrayBoxes c="ml-[6px]" />
              <Sep c="ml-[8px]" />
              <TX c="ml-[6px]" />
              <TSpark c="ml-[5px]" v={0} />
              <TSpark c="ml-[6px]" v={1} />
              <TSpark c="ml-[7px]" v={2} />
              <TExcel c="ml-[5px]" />
            </div>
            <Grid />
            <div className="h-[16px] shrink-0 bg-[#f0f0f0] flex items-center border-l border-[#a0a0a0]">
              <div className="w-[17px] flex justify-center shrink-0"><ChevH d="l" /></div>
              <div className="w-[231px] h-[15px] bg-[#c8c8c8] shrink-0" />
              <div className="flex-1" />
              <div className="w-[17px] flex justify-center shrink-0"><ChevH d="r" /></div>
            </div>
            <div className="h-[5px] shrink-0" />
          </div>
        </div>
      </div>
      {/* Status */}
      <div className="h-[2px] shrink-0 border-t border-[#a0a0a0] bg-[#f0f0f0] flex pl-[964px]">
        <div className="w-[101px] border-l border-[#a0a0a0]" />
        <div className="w-[97px] border-l border-[#a0a0a0]" />
        <div className="flex-1 border-l border-[#a0a0a0]" />
      </div>
    </div>
  );
}
